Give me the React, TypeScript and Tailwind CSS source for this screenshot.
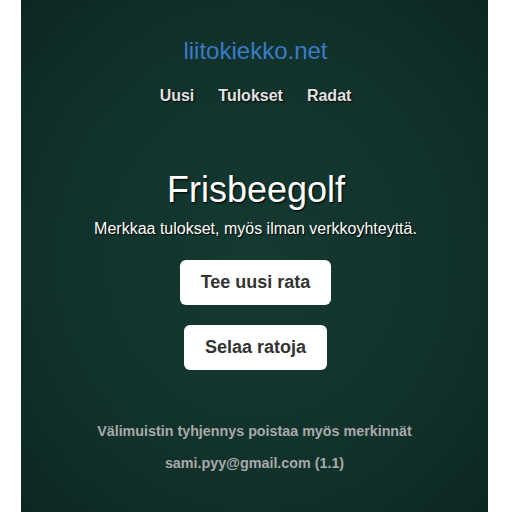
export default function App() {
  return (
    <div className="min-h-[512px] bg-white flex justify-center font-['Liberation_Sans',Arial,sans-serif]">
      <div className="w-[467px] ml-[-3px] min-h-[512px] bg-[radial-gradient(ellipse_at_center,#143a31_0%,#11322b_60%,#0d2621_100%)] flex flex-col items-center">
        {/* Header */}
        <a className="mt-[37px] ml-[2px] text-[24px] leading-[28px] text-[#3a7bc8]">liitokiekko.net</a>
        <nav className="mt-[19px] ml-[2px] flex gap-[24px] text-[16px] font-bold text-[#e2e2e2] [text-shadow:1px_1px_2px_#000]">
          <span>Uusi</span>
          <span>Tulokset</span>
          <span>Radat</span>
        </nav>

        {/* Main */}
        <h1 className="mt-[61px] ml-[3px] text-[36px] leading-[42px] text-white [text-shadow:1px_1px_2px_#000]">
          Frisbeegolf
        </h1>
        <p className="mt-[6px] ml-[2px] text-[16px] text-white [text-shadow:1px_1px_1px_#000]">
          Merkkaa tulokset, myös ilman verkkoyhteyttä.
        </p>
        <button className="mt-[19px] ml-[2px] h-[45px] px-[21px] bg-white rounded-[6px] text-[18px] font-bold text-[#333]">
          Tee uusi rata
        </button>
        <button className="mt-[20px] ml-[2px] h-[45px] px-[21px] bg-white rounded-[6px] text-[18px] font-bold text-[#333]">
          Selaa ratoja
        </button>

        {/* Footer */}
        <p className="mt-[51px] text-[14.3px] font-bold text-[#a9a9a9]">
          Välimuistin tyhjennys poistaa myös merkinnät
        </p>
        <p className="mt-[11px] text-[14.3px] font-bold text-[#a9a9a9]">sami.pyy@gmail.com (1.1)</p>
      </div>
    </div>
  );
}
